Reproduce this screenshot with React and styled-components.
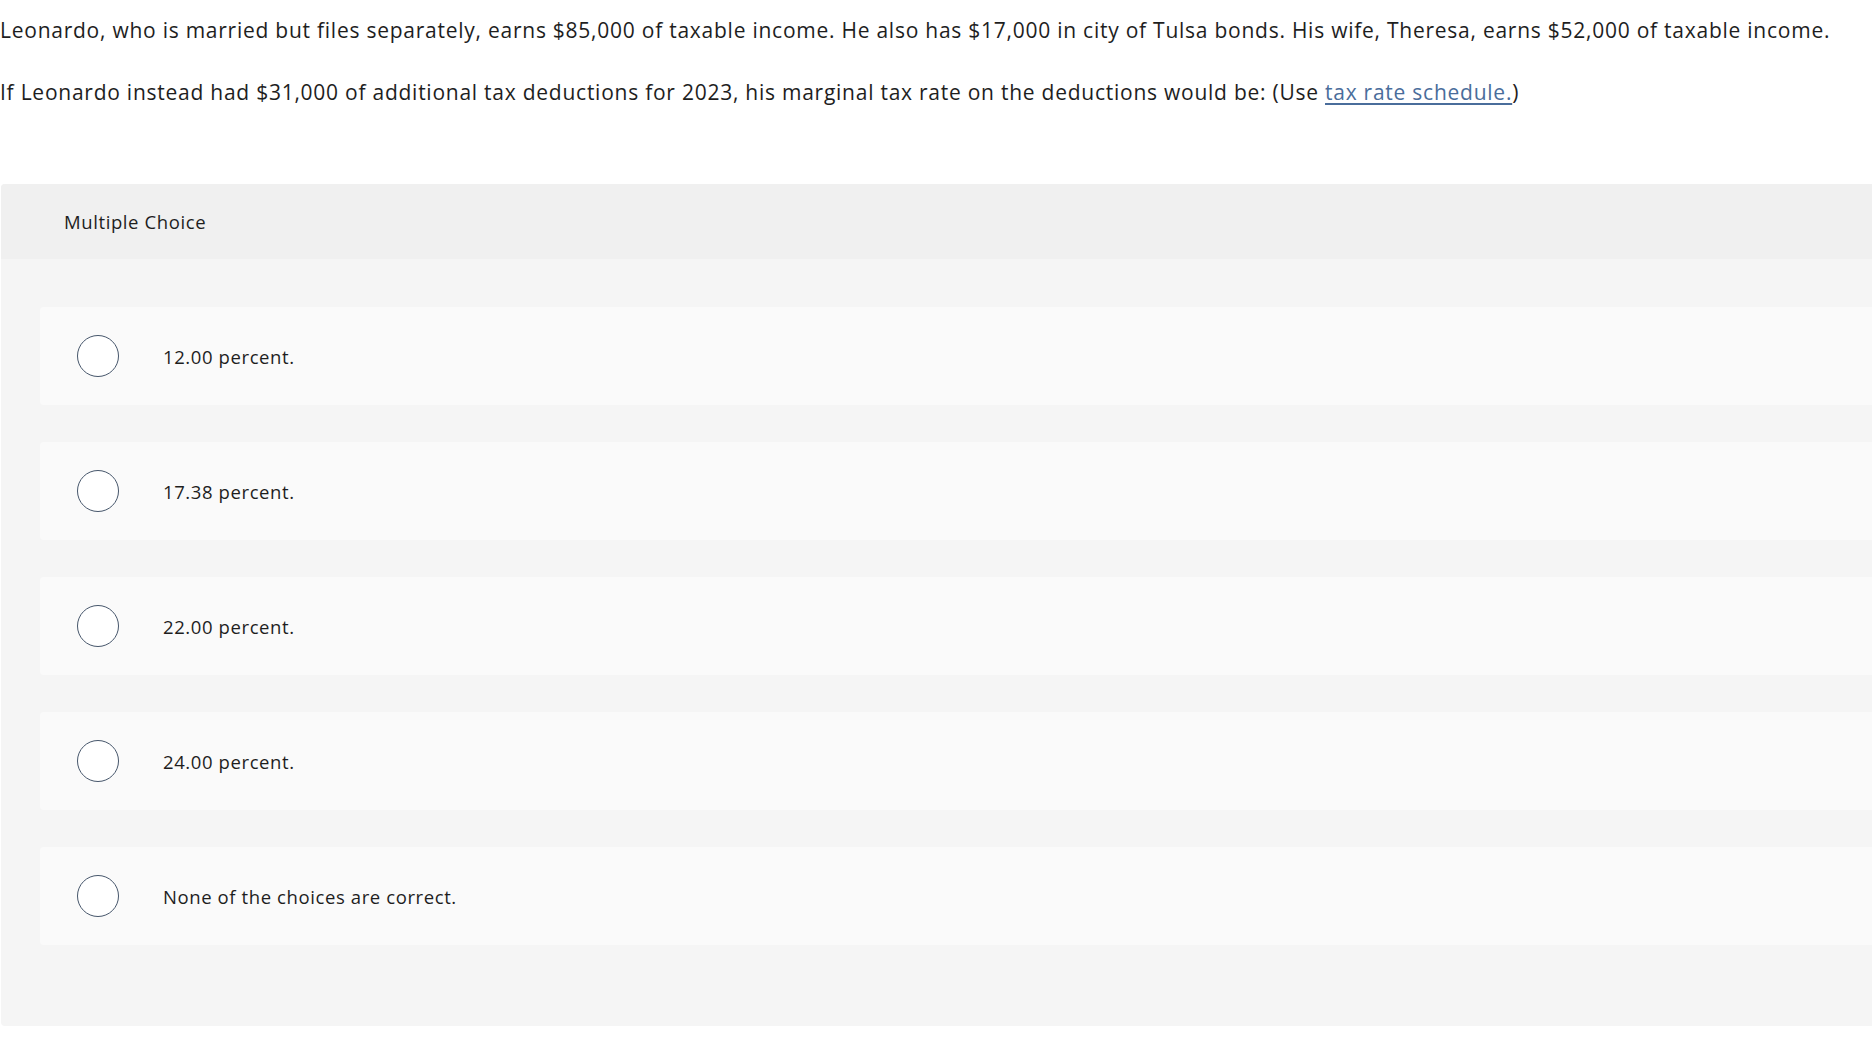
import React from 'react';
import styled, { createGlobalStyle } from 'styled-components';

const GlobalStyle = createGlobalStyle`
  html, body {
    margin: 0;
    padding: 0;
    background: #ffffff;
  }

  body {
    font-family: 'Open Sans', 'Liberation Sans', sans-serif;
    color: #1e1e1e;
  }
`;

const Page = styled.div`
  width: 1872px;
  overflow: hidden;
`;

const Question = styled.p`
  margin: 0;
  font-size: 21px;
  line-height: 30px;
  letter-spacing: 0.75px;
  white-space: nowrap;

  & + & {
    margin-top: 32px;
  }

  &:first-child {
    padding-top: 15px;
  }
`;

const Link = styled.a`
  color: #4a6d9b;
  text-decoration: underline;
  text-underline-offset: 3px;
`;

const Panel = styled.section`
  margin: 77px 0 0 1px;
  width: 1880px;
  background: #f5f5f5;
  border-radius: 4px;
  padding-bottom: 81px;
`;

const PanelHeader = styled.header`
  display: flex;
  align-items: center;
  height: 75px;
  padding-left: 63px;
  background: #f0f0f0;
  border-radius: 4px 4px 0 0;
  font-size: 18.5px;
  letter-spacing: 0.6px;
`;

const Choices = styled.ul`
  display: flex;
  flex-direction: column;
  gap: 37px;
  margin: 0;
  padding: 48px 0 0 39px;
  list-style: none;
`;

const Choice = styled.li`
  display: flex;
  align-items: center;
  height: 98px;
  padding-left: 37px;
  background: #fafafa;
  border-radius: 4px;
  font-size: 18.5px;
  letter-spacing: 0.6px;
`;

const Radio = styled.span`
  flex: none;
  box-sizing: border-box;
  width: 42px;
  height: 42px;
  margin-right: 44px;
  border: 1.5px solid #46566b;
  border-radius: 50%;
  background: #ffffff;
`;

const choices = [
  '12.00 percent.',
  '17.38 percent.',
  '22.00 percent.',
  '24.00 percent.',
  'None of the choices are correct.',
];

const App = () => (
  <Page>
    <GlobalStyle />
    <Question>
      Leonardo, who is married but files separately, earns $85,000 of taxable
      income. He also has $17,000 in city of Tulsa bonds. His wife, Theresa,
      earns $52,000 of taxable income.
    </Question>
    <Question>
      If Leonardo instead had $31,000 of additional tax deductions for 2023,
      his marginal tax rate on the deductions would be: (Use{' '}
      <Link href="#">tax rate schedule.</Link>)
    </Question>
    <Panel>
      <PanelHeader>Multiple Choice</PanelHeader>
      <Choices>
        {choices.map((text) => (
          <Choice key={text}>
            <Radio />
            {text}
          </Choice>
        ))}
      </Choices>
    </Panel>
  </Page>
);

export default App;
